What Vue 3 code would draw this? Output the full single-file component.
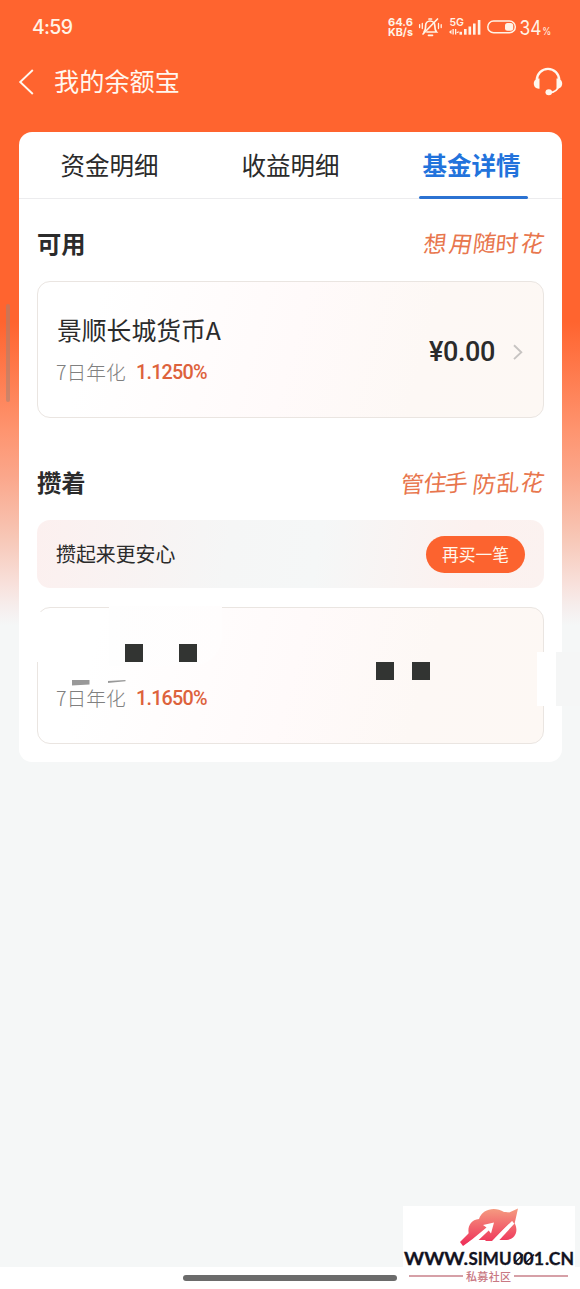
<script setup>
const tabs = ['资金明细', '收益明细', '基金详情']
const activeTab = 2
</script>

<template>
  <div class="page">
    <header class="status">
      <span class="clock">4:59</span>
      <svg class="status-icons" width="170" height="30" viewBox="0 0 170 30" fill="#fff3e6">
        <g font-family="Inter, sans-serif" font-weight="700">
          <text x="8" y="18.500" font-size="11" textLength="25" lengthAdjust="spacingAndGlyphs">64.6</text>
          <text x="8" y="28.500" font-size="10.800" textLength="25" lengthAdjust="spacingAndGlyphs">KB/s</text>
          <text x="69.500" y="18.500" font-size="10.500" font-weight="600" textLength="14.500" lengthAdjust="spacingAndGlyphs">5G</text>
        </g>
        <g fill="none" stroke="#fff3e6" stroke-width="1.700" stroke-linecap="round">
          <path d="M44 25c1.800-2 1.600-4 1.600-6.200 0-2.800 2-4.800 4.500-4.800s4.700 2 4.700 4.800c0 2.700 0 4.200 1.700 6.200H47" />
          <path d="M49 12h2.500M48.500 28.300h4" />
          <path d="M43 27 57.500 12" />
          <path d="M42.300 16.500v5M39.600 17.700v2.800M58.500 16.500v5M61.200 17.700v2.800" stroke-width="1.300" />
        </g>
        <g>
          <path d="m69 25 2.500-2.200v4.400z M72.500 22h1.300v5.500h-1.300z M75 22h1.300v5.500H75z m1.300 4 2.200-2.200v2.200z" />
          <rect x="79.500" y="24.800" width="2.500" height="2.900" />
          <rect x="84" y="22" width="2.600" height="5.700" />
          <rect x="88.500" y="19.500" width="2.600" height="8.200" />
          <rect x="93" y="16.500" width="2.600" height="11.200" />
          <rect x="97.800" y="13" width="2.600" height="14.700" />
        </g>
        <rect x="107.800" y="14" width="27.500" height="11.700" rx="5.800" fill="none" stroke="#fff3e6" stroke-width="1.500" />
        <rect x="125" y="16" width="8.200" height="7.700" rx="2.500" />
        <text x="139.500" y="27.500" font-family="Inter, sans-serif" font-size="20" textLength="22" lengthAdjust="spacingAndGlyphs">34</text>
        <text x="162.300" y="27.500" font-family="Inter, sans-serif" font-size="11" textLength="9" lengthAdjust="spacingAndGlyphs">%</text>
      </svg>
    </header>

    <nav class="navbar">
      <svg class="back" width="18" height="28" viewBox="0 0 18 28" fill="none" stroke="#fff7ee" stroke-width="1.900">
        <path d="M14.800 2 2.200 14l12.600 12" />
      </svg>
      <h1>我的余额宝</h1>
      <svg class="headset" width="30" height="30" viewBox="0 0 30 30">
        <path d="M3.800 15V13a11.200 11.200 0 0 1 22.400 0v2" fill="none" stroke="#fff7ee" stroke-width="2.300" />
        <path d="M25.800 19c-1 4-4 6.300-9.500 6.800" fill="none" stroke="#fff7ee" stroke-width="1.600" />
        <path d="M6.500 11.500v10.200C3 22 .8 19.800.8 16.600s2.200-5 5.700-5.100zM23.500 11.500v10.200c3.500.3 5.700-1.900 5.700-5.100s-2.200-5-5.700-5.100z" fill="#fff7ee" />
        <ellipse cx="15.800" cy="25.300" rx="3.300" ry="3" fill="#fff7ee" />
      </svg>
    </nav>

    <main class="sheet">
      <div class="tabs">
        <div v-for="(tab, i) in tabs" :key="tab" class="tab" :class="{ active: i === activeTab }">{{ tab }}</div>
      </div>

      <section class="available">
        <div class="section-head">
          <h2>可用</h2>
          <svg class="slogan" width="124" height="34" viewBox="0 0 124 34">
            <text transform="skewX(-9)" x="7 32 56 79 103" y="26 25 25 26 24" rotate="-3 2 -2 -4 4">想用随时花</text>
          </svg>
        </div>
        <div class="fund">
          <div class="fund-info">
            <div class="fund-name">景顺长城货币A</div>
            <div class="yield"><span>7日年化</span><b>1.1250%</b></div>
          </div>
          <span class="amount">¥0.00</span>
          <svg class="chevron" width="12" height="18" viewBox="0 0 12 18" fill="none" stroke="#c7c4c2" stroke-width="1.900">
            <path d="m2 2.300 7.300 6.900L2 16.100" />
          </svg>
        </div>
      </section>

      <section class="saving">
        <div class="section-head">
          <h2>攒着</h2>
          <svg class="slogan" width="146" height="34" viewBox="0 0 146 34">
            <text transform="skewX(-9)" x="6 29 50 78 102 125" y="27 26 26 27 26 24" rotate="-2 -3 -5 -2 -4 4">管住手防乱花</text>
          </svg>
        </div>
        <div class="banner">
          <span>攒起来更安心</span>
          <button>再买一笔</button>
        </div>
        <div class="fund second">
          <div class="fund-info">
            <div class="fund-name"></div>
            <div class="yield"><span>7日年化</span><b>1.1650%</b></div>
          </div>
          <i class="mask top"></i>
          <i class="mask left"></i>
          <i class="mask right"></i>
          <i class="mask edge"></i>
          <i class="block b1"></i>
          <i class="block b2"></i>
          <i class="block b3"></i>
          <i class="block b4"></i>
          <i class="dash d1"></i>
          <i class="dash d2"></i>
        </div>
      </section>
    </main>

    <footer class="gesture"><span></span></footer>
    <i class="side-handle"></i>

    <div class="watermark">
      <svg width="177" height="83" viewBox="0 0 177 83">
        <defs>
          <linearGradient id="cloud" gradientUnits="userSpaceOnUse" x1="0" y1="3" x2="0" y2="40">
            <stop offset="0" stop-color="#f59a80" />
            <stop offset="1" stop-color="#ee2c58" />
          </linearGradient>
        </defs>
        <rect width="172" height="62" fill="#fff" />
        <path d="M69 34C63 28 64 14 76 13 79 3 92 0 101 6c9 0 11 5 10 10 5 8 2 17-7 18z" fill="url(#cloud)" />
        <path d="m57 36 14-14 6 6-17 12z" fill="url(#cloud)" />
        <path d="M60.500 40.500 83.500 21.500 80 19 91 16.500 88 27.500 85.700 24.500 74 35.500H68z" fill="#fff" />
        <path d="m87 35.500 22.500-21L112 17 95 35.500z" fill="#fff" />
        <path d="m82 35 22-24-3.500-2L115 2.500 111.500 18l-2.700-3.500L89 35z" fill="url(#cloud)" />
        <g class="site">
          <text x="1" y="59" textLength="64" lengthAdjust="spacingAndGlyphs">WWW.</text>
          <text x="65.500" y="59" textLength="43" lengthAdjust="spacingAndGlyphs">SIMU</text>
          <text x="110" y="59" textLength="31" lengthAdjust="spacingAndGlyphs">001</text>
          <text x="142" y="59" textLength="29" lengthAdjust="spacingAndGlyphs">.CN</text>
        </g>
        <path d="m111 57.500 9-9M122 57.500l9-9" stroke="#13131f" stroke-width="1.400" />
        <path d="M6 70h54M111 70h54" stroke="#c9818a" stroke-width="1.300" />
        <text x="63" y="74.500" class="community" textLength="45">私募社区</text>
      </svg>
    </div>
  </div>
</template>

<style>
body { margin: 0; }
</style>

<style scoped>
* { box-sizing: border-box; }
.page {
  position: relative;
  width: 580px;
  height: 1289px;
  overflow: hidden;
  display: flex;
  flex-direction: column;
  color: #2b2b2b;
  font-family: "Noto Sans CJK SC", sans-serif;
  background: linear-gradient(#ff642f 0, #ff642f 322px, #fe946f 430px, #fba68a 475px, #f7c8b8 540px, #f8e1dc 585px, #f6eeed 607px, #f5f7f7 625px);
}
.status { height: 54px; display: flex; justify-content: space-between; padding: 0 30px 0 32px; }
.clock { font: 500 19.500px/55px Inter, sans-serif; color: #fff3e6; letter-spacing: -.7px; }
.status-icons { margin-top: 7px; overflow: visible; }
.navbar { height: 78px; padding: 0 17px 0 18px; display: flex; align-items: flex-start; }
.back { margin-top: 14px; }
h1 { flex: 1; margin: 7px 0 0 18px; font-size: 25.200px; line-height: 38px; font-weight: 400; color: #fff7ee; }
.headset { margin-top: 13px; }
.sheet { margin: 0 18px 0 19px; height: 630px; border-radius: 13px; background: #fff; flex: none; }
.tabs { height: 67px; display: flex; border-bottom: 1px solid #ececee; }
.tab { position: relative; flex: 1; text-align: center; font-size: 24.500px; line-height: 65px; }
.tab.active { color: #2273dc; font-weight: 700; }
.tab.active::after { content: ""; position: absolute; left: 38px; bottom: -1px; width: 109px; height: 3px; border-radius: 2px; background: #2b72d2; }
.available, .saving { padding: 0 18px; }
.available { height: 239px; }
.section-head { height: 82px; display: flex; justify-content: space-between; align-items: flex-start; }
h2 { margin: 26px 0 0; font-size: 24.300px; line-height: 36px; font-weight: 700; }
.slogan { margin-top: 28px; overflow: visible; }
.slogan text { font-size: 23px; font-weight: 400; fill: #e8764d; }
.fund {
  position: relative;
  height: 137px;
  border: 1px solid #eae5e1;
  border-radius: 13px;
  padding: 0 19px;
  display: flex;
  align-items: center;
  background: linear-gradient(105deg, #fff 12%, #fffafa 50%, #fdf8f5 75%, #fdf8f4);
}
.fund-info { flex: 1; align-self: flex-start; padding-top: 28px; }
.fund-name { height: 40px; font-size: 24.800px; line-height: 38px; white-space: nowrap; }
.yield { display: flex; align-items: center; height: 44px; line-height: 44px; margin-left: -1px; }
.yield span { font-size: 19.700px; font-weight: 300; color: #808080; width: 80px; white-space: nowrap; }
.yield b { font: 500 19.800px/44px Roboto, sans-serif; letter-spacing: -.8px; color: #dd623c; padding-top: 2px; }
.amount { font: 500 27px/40px Roboto, sans-serif; letter-spacing: -.4px; margin: 4px 17px 0 0; }
.chevron { margin-top: 5px; }
.banner {
  height: 68px;
  border-radius: 13px;
  margin-bottom: 19px;
  padding: 0 19px;
  display: flex;
  align-items: center;
  justify-content: space-between;
  font-size: 19.900px;
  background: linear-gradient(98deg, #fcf0ef, #f5f6f6 38%, #f5f7f7 55%, #fcf1ef 85%, #fbf2f0);
}
.banner span { margin-top: -1px; }
button { width: 99px; height: 37px; border: 0; padding: 0; border-radius: 19px; background: #fc632f; color: #fff7ec; font: 400 16.800px/37px "Noto Sans CJK SC", sans-serif; }
.mask, .block, .dash { position: absolute; }
.top { left: 71px; top: -2px; width: 113px; height: 60px; background: linear-gradient(90deg, #fefefe, #fffdfd); border-radius: 0 0 30px 0; }
.left { left: -2px; top: -1px; width: 40px; height: 55px; background: #fff; clip-path: polygon(0 0, 4px 0, 4px 5px, 100% 5px, 100% 100%, 0 100%); }
.right { left: 499px; top: 44px; width: 19px; height: 54px; background: #fff; }
.edge { left: 517.500px; top: 44px; width: 25px; height: 54px; background: #f5f6f6; }
.block { width: 18px; height: 18px; background: #323432; }
.b1 { left: 87px; top: 36px; }
.b2 { left: 141px; top: 36px; }
.b3 { left: 338px; top: 54px; }
.b4 { left: 374px; top: 54px; }
.dash { width: 18px; background: #999; }
.d1 { left: 33.500px; top: 72px; height: 5.500px; clip-path: polygon(0 0, 100% 0, 100% 80%, 0 100%); }
.d2 { left: 69.500px; top: 72px; height: 3px; clip-path: polygon(0 30%, 100% 0, 100% 40%, 0 100%); }
.gesture { margin-top: auto; height: 22.500px; background: #fff; display: flex; justify-content: center; }
.gesture span { width: 214px; height: 5.500px; border-radius: 3px; background: #6b6b6b; margin-top: 8.500px; }
.side-handle { position: absolute; left: 6px; top: 304px; width: 4px; height: 98px; border-radius: 2px; background: rgba(165, 130, 115, .55); }
.watermark { position: absolute; left: 403px; top: 1206px; line-height: 0; }
.site { font-family: Lato, sans-serif; font-weight: 700; font-size: 16.500px; fill: #13131f; stroke: #13131f; stroke-width: .3px; }
.community { font-size: 11px; fill: #c97883; font-weight: 500; }
</style>
